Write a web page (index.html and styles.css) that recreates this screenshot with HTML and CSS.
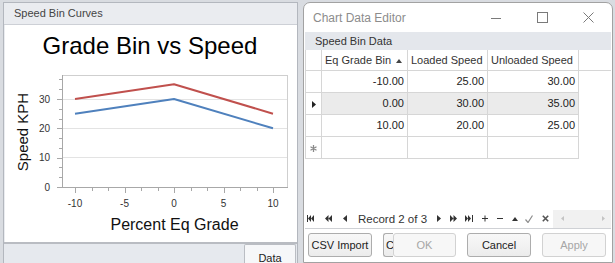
FILE: index.html
```html
<!DOCTYPE html>
<html>
<head>
    <title>Speed Bin Curves</title>
    <link rel="stylesheet" href="styles.css">
</head>
<body>
<div class="desk">
    <section class="panel">
        <div class="panel-head">Speed Bin Curves</div>
        <div class="chart-box">
            <svg class="chart" width="292" height="217" viewBox="0 0 292 217">
                <text class="chart-title" x="145" y="29" text-anchor="middle">Grade Bin vs Speed</text>
                <g class="grid-lines">
                    <line x1="57" y1="132.5" x2="282" y2="132.5"/>
                    <line x1="57" y1="103.5" x2="282" y2="103.5"/>
                    <line x1="57" y1="74.5" x2="282" y2="74.5"/>
                </g>
                <rect class="plot" x="57.5" y="50.5" width="225" height="112"/>
                <g class="ticks" id="yticks"></g>
                <g class="ticks" id="xticks"></g>
                <line class="axis" x1="57.5" y1="50" x2="57.5" y2="163"/>
                <line class="axis" x1="57" y1="162.5" x2="283" y2="162.5"/>
                <g class="tick-labels">
                    <text x="45" y="165.5" text-anchor="end">0</text>
                    <text x="45" y="136" text-anchor="end">10</text>
                    <text x="45" y="107" text-anchor="end">20</text>
                    <text x="45" y="77.5" text-anchor="end">30</text>
                    <text x="70" y="182" text-anchor="middle">-10</text>
                    <text x="119.5" y="182" text-anchor="middle">-5</text>
                    <text x="169" y="182" text-anchor="middle">0</text>
                    <text x="218.5" y="182" text-anchor="middle">5</text>
                    <text x="268" y="182" text-anchor="middle">10</text>
                </g>
                <polyline class="series loaded" points="70,88.7 169,74 268,103.3"/>
                <polyline class="series unloaded" points="70,74 169,59.3 268,88.7"/>
                <text class="axis-title" transform="translate(23,107) rotate(-90)" text-anchor="middle">Speed KPH</text>
                <text class="axis-title x-title" x="169.5" y="205" text-anchor="middle">Percent Eq Grade</text>
            </svg>
        </div>
        <div class="panel-foot">
            <button class="tab-btn">Data</button>
        </div>
    </section>

    <section class="editor">
        <div class="titlebar">
            <span class="win-title">Chart Data Editor</span>
            <span class="win-btn">
                <svg width="10" height="10" viewBox="0 0 10 10"><path d="M0 5.5H10"/></svg>
            </span>
            <span class="win-btn">
                <svg width="11" height="11" viewBox="0 0 11 11"><rect x="0.5" y="0.5" width="10" height="10"/></svg>
            </span>
            <span class="win-btn">
                <svg width="11" height="11" viewBox="0 0 11 11"><path d="M0.5 0.5L10.5 10.5M10.5 0.5L0.5 10.5"/></svg>
            </span>
        </div>
        <div class="group-cap">Speed Bin Data</div>
        <div class="grid-wrap">
            <table class="grid">
                <colgroup>
                    <col class="c-ind"><col class="c-grade"><col class="c-loaded"><col class="c-unloaded"><col>
                </colgroup>
                <thead>
                    <tr>
                        <th class="ind"></th>
                        <th>Eq Grade Bin<svg class="sort" width="6" height="4" viewBox="0 0 6 4"><path d="M0 4L3 0L6 4Z"/></svg></th>
                        <th>Loaded Speed</th>
                        <th>Unloaded Speed</th>
                        <th class="fill"></th>
                    </tr>
                </thead>
                <tbody>
                    <tr>
                        <td class="ind"></td><td>-10.00</td><td>25.00</td><td>30.00</td><td class="fill"></td>
                    </tr>
                    <tr class="current">
                        <td class="ind"><svg width="4" height="7" viewBox="0 0 4 7"><path d="M0 0L4 3.5L0 7Z"/></svg></td><td>0.00</td><td>30.00</td><td>35.00</td><td class="fill"></td>
                    </tr>
                    <tr>
                        <td class="ind"></td><td>10.00</td><td>20.00</td><td>25.00</td><td class="fill"></td>
                    </tr>
                    <tr>
                        <td class="ind"><svg class="star" width="7" height="7" viewBox="0 0 7 7"><path d="M3.5 0V7M0.5 1.8L6.5 5.2M6.5 1.8L0.5 5.2"/></svg></td><td></td><td></td><td></td><td class="fill"></td>
                    </tr>
                </tbody>
            </table>
        </div>
        <div class="nav">
            <svg class="nv n-first" width="7" height="7" viewBox="0 0 7 7"><path d="M0 0H1V7H0Z M4 0L1 3.5L4 7Z M7 0L4 3.5L7 7Z"/></svg>
            <svg class="nv n-gap" width="7" height="7" viewBox="0 0 7 7"><path d="M3.5 0L0 3.5L3.5 7Z M7 0L3.5 3.5L7 7Z"/></svg>
            <svg class="nv n-gap" width="4" height="7" viewBox="0 0 4 7"><path d="M4 0L0 3.5L4 7Z"/></svg>
            <span class="record">Record 2 of 3</span>
            <svg class="nv n-next" width="4" height="7" viewBox="0 0 4 7"><path d="M0 0L4 3.5L0 7Z"/></svg>
            <svg class="nv n-s9" width="7" height="7" viewBox="0 0 7 7"><path d="M0 0L3.5 3.5L0 7Z M3.5 0L7 3.5L3.5 7Z"/></svg>
            <svg class="nv n-s8" width="8" height="7" viewBox="0 0 8 7"><path d="M0 0L3 3.5L0 7Z M3 0L6 3.5L3 7Z M7 0H8V7H7Z"/></svg>
            <svg class="nv line n-s9" width="6" height="7" viewBox="0 0 6 7"><path d="M0 3.5H6M3 0.5V6.5"/></svg>
            <svg class="nv line n-s9" width="6" height="7" viewBox="0 0 6 7"><path d="M0 3.5H6"/></svg>
            <svg class="nv n-s9" width="6" height="4" viewBox="0 0 6 4"><path d="M0 4L3 0L6 4Z"/></svg>
            <svg class="nv check n-s7" width="8" height="8" viewBox="0 0 8 8"><path d="M0.5 4.5L3 7.5L7.5 0.5"/></svg>
            <svg class="nv cross n-s9" width="7" height="7" viewBox="0 0 7 7"><path d="M0.8 0.8L6.2 6.2M6.2 0.8L0.8 6.2"/></svg>
            <div class="hscroll">
                <svg width="3" height="5" viewBox="0 0 3 5"><path d="M3 0L0 2.5L3 5Z"/></svg>
                <svg width="3" height="5" viewBox="0 0 3 5"><path d="M0 0L3 2.5L0 5Z"/></svg>
            </div>
        </div>
        <div class="btn-row">
            <button class="btn b-csv">CSV Import</button>
            <button class="btn b-part">C</button>
            <button class="btn b-ok" disabled>OK</button>
            <button class="btn b-gap">Cancel</button>
            <button class="btn b-gap" disabled>Apply</button>
        </div>
    </section>
</div>

<script type="text/javascript">
    // minor count 2 between majors, like the chart control default
    const svgNs = 'http://www.w3.org/2000/svg';

    function tick(group, x1, y1, x2, y2) {
        const l = document.createElementNS(svgNs, 'line');
        l.setAttribute('x1', x1);
        l.setAttribute('y1', y1);
        l.setAttribute('x2', x2);
        l.setAttribute('y2', y2);
        group.appendChild(l);
    }

    const yticks = document.getElementById('yticks');
    for(let i = 0; i <= 11; i++) {
        let y = Math.round(162 - i * (10 / 3) * 2.933) + 0.5;
        tick(yticks, i % 3 === 0 ? 52 : 54, y, 57, y);
    }

    const xticks = document.getElementById('xticks');
    for(let i = 0; i <= 12; i++) {
        let x = Math.round(70 + i * 16.5) + 0.5;
        tick(xticks, x, 163, x, i % 3 === 0 ? 168 : 166);
    }
</script>
</body>
</html>
```

FILE: styles.css
```css
body {
    margin: 0;
    background-color: #d9dce1;
    font-family: "Liberation Sans", Arial, sans-serif;
    font-size: 11px;
    color: #222;
}
.desk {
    display: flex;
    align-items: flex-start;
    height: 263px;
    padding: 2px 0 0 3px;
    box-sizing: border-box;
    overflow: hidden;
}

/* left panel */
.panel {
    width: 295px;
    height: 261px;
    box-sizing: border-box;
    border: 1px solid #b3b7be;
    border-bottom: none;
    background-color: #eaecf0;
    display: flex;
    flex-direction: column;
}
.panel-head {
    height: 21px;
    line-height: 21px;
    padding-left: 10px;
    border-bottom: 1px solid #cdd0d6;
    color: #444;
}
.chart-box {
    height: 217px;
    margin-left: 1px;
    background-color: #fff;
}
.chart {
    display: block;
}
.chart text {
    font-family: "Liberation Sans", Arial, sans-serif;
}
.chart-title {
    font-size: 24px;
    fill: #000;
}
.grid-lines line {
    stroke: #e3e3e3;
    stroke-width: 1;
}
.plot {
    fill: none;
    stroke: #cfcfcf;
    stroke-width: 1;
}
.axis, .ticks line {
    stroke: #a8a8a8;
    stroke-width: 1;
}
.tick-labels text {
    font-size: 10px;
    fill: #333;
}
.series {
    fill: none;
    stroke-width: 2;
    stroke-linejoin: round;
}
.loaded {
    stroke: #4f81bd;
}
.unloaded {
    stroke: #c0504d;
}
.axis-title {
    font-size: 15px;
    fill: #111;
}
.x-title {
    font-size: 16px;
}
.panel-foot {
    flex: 1;
    border-top: 2px solid #b9bcc2;
    background-color: #e6e9ee;
    display: flex;
    justify-content: flex-end;
    padding-right: 1px;
}
.tab-btn {
    width: 52px;
    height: 22px;
    margin: 0;
    padding: 4px 0 0 0;
    border: 1px solid #babdc3;
    border-bottom: none;
    border-radius: 2px 2px 0 0;
    background-color: #f6f7f9;
    font-family: inherit;
    font-size: 11px;
    color: #222;
    text-align: center;
    vertical-align: top;
}

/* editor window */
.editor {
    width: 310px;
    height: 261px;
    margin-left: 5px;
    box-sizing: border-box;
    border: 1px solid #a2a2a2;
    border-radius: 7px 7px 0 0;
    background-color: #fff;
    padding: 0 1px;
    display: flex;
    flex-direction: column;
}
.titlebar {
    height: 29px;
    display: flex;
    align-items: center;
}
.win-title {
    padding-left: 8px;
    font-size: 12px;
    color: #8c8c8c;
    margin-right: auto;
}
.win-btn {
    width: 46px;
    height: 29px;
    display: flex;
    align-items: center;
    justify-content: center;
}
.win-btn svg {
    fill: none;
    stroke: #7a7a7a;
    stroke-width: 1;
}
.group-cap {
    height: 18px;
    line-height: 18px;
    padding-left: 10px;
    background-color: #e4e7ec;
    color: #333;
}
.grid-wrap {
    height: 159px;
    overflow: hidden;
}
.grid {
    width: 308px;
    table-layout: fixed;
    border-collapse: separate;
    border-spacing: 0;
}
.c-ind { width: 17px; }
.c-grade { width: 86px; }
.c-loaded { width: 80px; }
.c-unloaded { width: 91px; }
.grid th, .grid td {
    padding: 0;
    border-right: 1px solid #d6d6d6;
    border-bottom: 1px solid #d6d6d6;
    white-space: nowrap;
    overflow: hidden;
}
.grid th {
    line-height: 20px;
    font-weight: normal;
    text-align: left;
    padding-left: 3px;
    color: #333;
}
.grid td {
    line-height: 21px;
    height: 21px;
    text-align: right;
    padding-right: 3px;
}
.grid .ind {
    border-left: 1px solid #d6d6d6;
    padding: 0;
    text-align: center;
}
.grid .ind svg {
    vertical-align: middle;
    fill: #222;
}
.grid .ind .star {
    fill: none;
    stroke: #8a8a8a;
    stroke-width: 1.3;
}
.grid td.fill {
    border: none;
}
.grid th.fill {
    border-right: none;
}
.current td {
    background-color: #ebebeb;
}
.current td.ind, .current td.fill {
    background-color: #fff;
}
.sort {
    margin-left: 5px;
    vertical-align: 1px;
    fill: #444;
}
.nav {
    height: 19px;
    border-bottom: 1px solid #cfd1d5;
    display: flex;
    align-items: center;
}
.nv {
    flex: none;
    fill: #333;
}
.nv.line {
    fill: none;
    stroke: #333;
    stroke-width: 1;
}
.nv.check {
    fill: none;
    stroke: #8c8c8c;
    stroke-width: 1.2;
}
.nv.cross {
    fill: none;
    stroke: #555;
    stroke-width: 1.6;
}
.n-first { margin-left: 2px; }
.n-gap { margin-left: 11px; }
.record {
    width: 67px;
    margin-left: 11px;
    font-size: 11.5px;
    color: #333;
    white-space: nowrap;
}
.n-next { margin-left: 12px; }
.n-s9 { margin-left: 9px; }
.n-s8 { margin-left: 8px; }
.n-s7 { margin-left: 7px; }
.hscroll {
    flex: 1;
    height: 18px;
    margin-left: 4px;
    background-color: #f1f1f1;
    display: flex;
    align-items: center;
    justify-content: space-between;
    padding: 0 6px 0 8px;
}
.hscroll svg {
    fill: #c4c4c4;
}
.btn-row {
    height: 33px;
    box-sizing: border-box;
    padding: 4px 0 0 3px;
    display: flex;
    align-items: flex-start;
}
.btn {
    height: 24px;
    width: 64px;
    margin: 0;
    padding: 0;
    box-sizing: border-box;
    border: 1px solid #adadad;
    border-radius: 3px;
    background: linear-gradient(#f8f8f8, #ececec);
    font-family: inherit;
    font-size: 11px;
    color: #222;
}
.btn:disabled {
    border-color: #d2d2d2;
    background: #f7f7f7;
    color: #a6a6a6;
}
.b-part {
    width: 10px;
    margin-left: 11px;
    padding-left: 2px;
    text-align: left;
    border-right: none;
    border-radius: 3px 0 0 3px;
    overflow: hidden;
}
.b-ok {
    width: 63px;
}
.b-gap {
    margin-left: 11px;
}
```
